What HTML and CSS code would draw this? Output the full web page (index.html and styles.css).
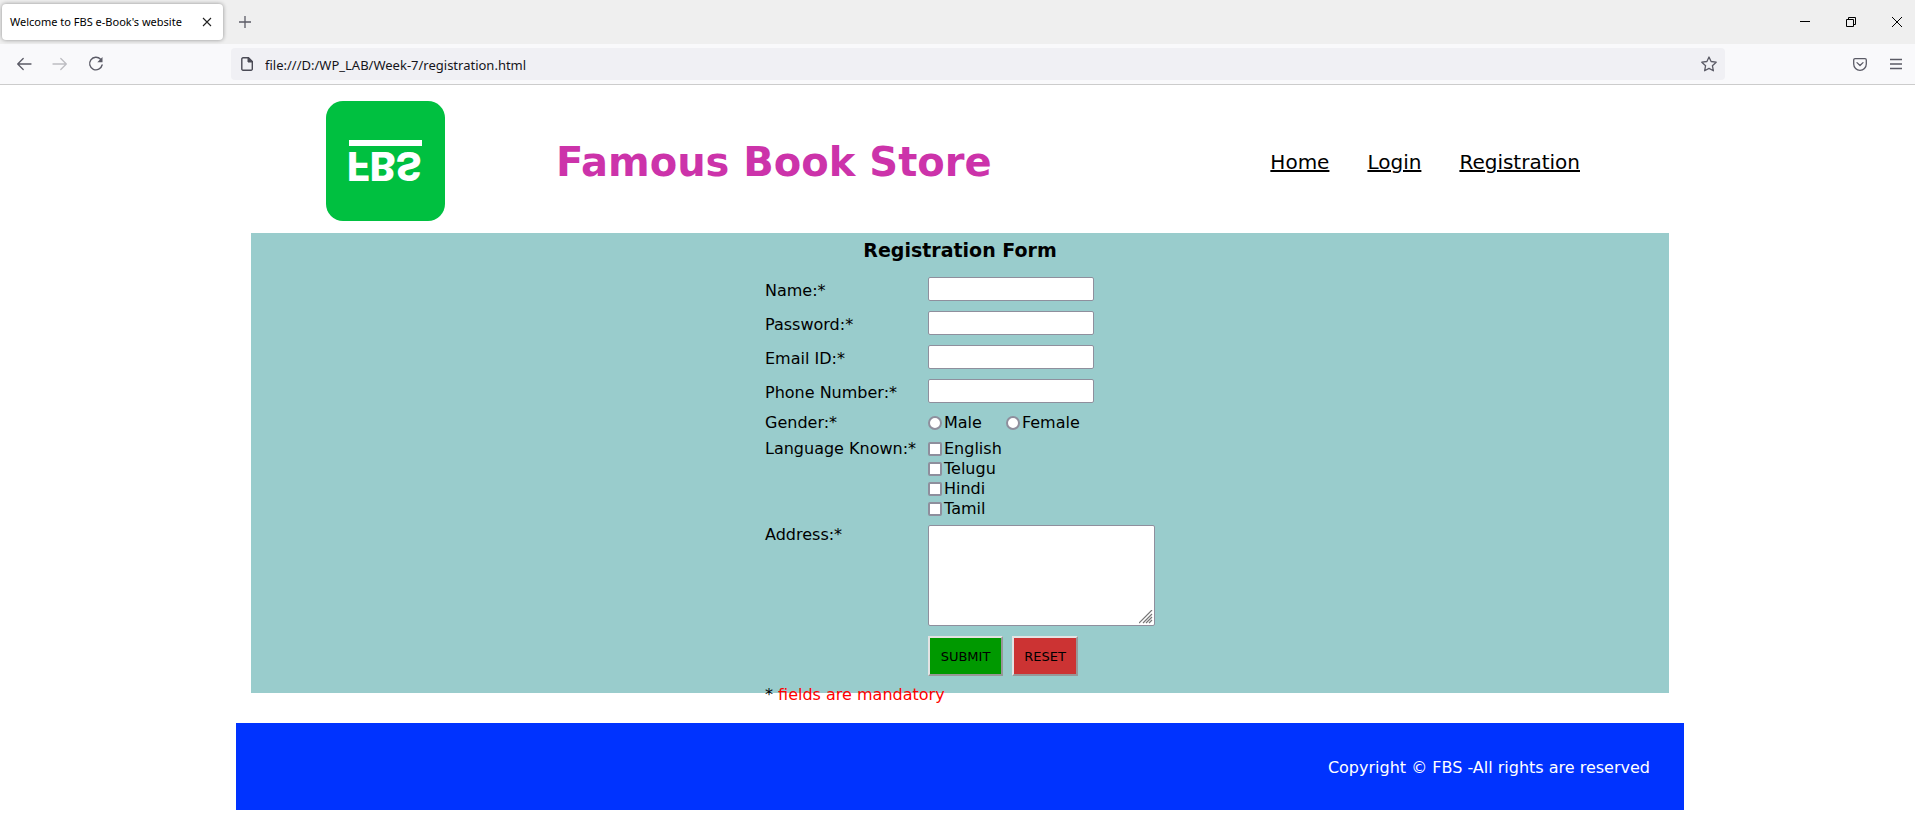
FILE: index.html
```html
<!DOCTYPE html>
<html lang="en">
<head>
<meta charset="utf-8">
<title>Welcome to FBS e-Book's website</title>
<link rel="stylesheet" href="styles.css">
</head>
<body>
<div class="browser">
  <div class="tabbar">
    <div class="tab">
      <span class="tab-title">Welcome to FBS e-Book's website</span>
      <button class="icon-button tab-close" type="button" aria-label="Close tab">
        <svg width="10" height="10" viewBox="0 0 10 10"><path d="M1 1l8 8M9 1l-8 8" stroke="#222" stroke-width="1.1" fill="none"/></svg>
      </button>
    </div>
    <button class="icon-button new-tab" type="button" aria-label="New tab">
      <svg width="12" height="12" viewBox="0 0 12 12"><path d="M6 0v12M0 6h12" stroke="#5b5b66" stroke-width="1.3" fill="none"/></svg>
    </button>
    <div class="window-controls">
      <button class="icon-button" type="button" aria-label="Minimize"><svg width="10" height="10" viewBox="0 0 10 10"><path d="M0 4.500h10" stroke="#000" fill="none"/></svg></button>
      <button class="icon-button" type="button" aria-label="Restore"><svg width="10" height="10" viewBox="0 0 10 10"><path d="M.5 2.500h7v7h-7zM2.500 2.500v-2h7v7h-2" stroke="#000" fill="none"/></svg></button>
      <button class="icon-button" type="button" aria-label="Close window"><svg width="10" height="10" viewBox="0 0 10 10"><path d="M0 0l10 10M10 0L0 10" stroke="#000" fill="none"/></svg></button>
    </div>
  </div>
  <div class="toolbar">
    <div class="history">
      <button class="icon-button" type="button" aria-label="Back"><svg width="16" height="16" viewBox="0 0 16 16"><path d="M15 8H1.800M7.200 2.500L1.700 8l5.500 5.500" stroke="#5b5b66" stroke-width="1.300" fill="none" stroke-linecap="round" stroke-linejoin="round"/></svg></button>
      <button class="icon-button" type="button" aria-label="Forward"><svg width="16" height="16" viewBox="0 0 16 16"><path d="M1 8h13.200M8.800 2.500L14.300 8l-5.500 5.500" stroke="#bdbdc2" stroke-width="1.300" fill="none" stroke-linecap="round" stroke-linejoin="round"/></svg></button>
      <button class="icon-button" type="button" aria-label="Reload"><svg width="16" height="16" viewBox="0 0 16 16"><path d="M12.600 3.300A6.300 6.300 0 1 0 14.100 9" stroke="#5b5b66" stroke-width="1.400" fill="none" stroke-linecap="round"/><path d="M14.500 1v5.200H9.300z" fill="#5b5b66"/></svg></button>
    </div>
    <div class="address-bar">
      <svg width="12" height="14" viewBox="0 0 12 14"><path d="M2 .8h5.500l3.800 3.700V12a1.200 1.200 0 0 1-1.200 1.200H2A1.200 1.200 0 0 1 .8 12V2A1.200 1.200 0 0 1 2 .8z" fill="none" stroke="#4a4a55" stroke-width="1.400"/><path d="M7 1v4h4.200z" fill="#4a4a55" stroke="#4a4a55"/></svg>
      <input class="address" type="text" aria-label="Address" value="file:///D:/WP_LAB/Week-7/registration.html">
      <button class="icon-button" type="button" aria-label="Bookmark this page"><svg width="16" height="16" viewBox="0 0 16 16"><path d="M8 1l2.100 4.500 5.100.7-3.800 3.500 1 5.100L8 12.400l-4.400 2.400 1-5.100L.8 6.200l5.100-.7z" fill="none" stroke="#5b5b66" stroke-width="1.300" stroke-linejoin="round"/></svg></button>
    </div>
    <div class="tools">
      <button class="icon-button" type="button" aria-label="Save to Pocket"><svg width="14" height="13" viewBox="0 0 14 13"><path d="M2 .7h10A1.300 1.300 0 0 1 13.300 2v4A6.300 6.300 0 0 1 .7 6V2A1.300 1.300 0 0 1 2 .7z" fill="none" stroke="#5b5b66" stroke-width="1.300"/><path d="M4 4.600l3 2.900 3-2.900" fill="none" stroke="#5b5b66" stroke-width="1.300" stroke-linecap="round" stroke-linejoin="round"/></svg></button>
      <button class="icon-button" type="button" aria-label="Open menu"><svg width="12" height="12" viewBox="0 0 12 12"><path d="M0 1.500h12M0 6h12M0 10.500h12" stroke="#5b5b66" stroke-width="1.300" fill="none"/></svg></button>
    </div>
  </div>
</div>

<div class="page">
  <header class="header">
    <svg class="logo" width="119" height="120" viewBox="0 0 119 120" role="img" aria-label="FBS logo">
      <rect width="119" height="120" rx="17" fill="#00c040"/>
      <rect x="23" y="39" width="73" height="6" fill="#fff"/>
      <text class="logo-text" x="21" y="-51" transform="scale(1 -1)">FBS</text>
    </svg>
    <h1 class="title">Famous Book Store</h1>
    <nav class="nav">
      <a href="#home">Home</a>
      <a href="#login">Login</a>
      <a href="#registration">Registration</a>
    </nav>
  </header>

  <main class="main">
    <h2 class="form-title">Registration Form</h2>
    <form class="form">
      <label class="field-label" for="name">Name:*</label>
      <input class="field" id="name" type="text">
      <label class="field-label" for="password">Password:*</label>
      <input class="field" id="password" type="password">
      <label class="field-label" for="email">Email ID:*</label>
      <input class="field" id="email" type="text">
      <label class="field-label" for="phone">Phone Number:*</label>
      <input class="field" id="phone" type="text">

      <span id="gender-label">Gender:*</span>
      <div class="gender" role="radiogroup" aria-labelledby="gender-label">
        <label class="choice"><input class="radio" type="radio" name="gender">Male</label>
        <label class="choice"><input class="radio" type="radio" name="gender">Female</label>
      </div>

      <span id="language-label">Language Known:*</span>
      <div role="group" aria-labelledby="language-label">
        <label class="choice"><input class="checkbox" type="checkbox">English</label>
        <label class="choice"><input class="checkbox" type="checkbox">Telugu</label>
        <label class="choice"><input class="checkbox" type="checkbox">Hindi</label>
        <label class="choice"><input class="checkbox" type="checkbox">Tamil</label>
      </div>

      <label for="address">Address:*</label>
      <textarea class="textarea" id="address"></textarea>

      <div class="actions">
        <button class="button submit" type="submit">SUBMIT</button>
        <button class="button reset" type="reset">RESET</button>
      </div>
      <p class="note">* <span class="note-text">fields are mandatory</span></p>
    </form>
  </main>

  <footer class="footer">Copyright © FBS -All rights are reserved</footer>
</div>
</body>
</html>
```
FILE: styles.css
```css
* { box-sizing: border-box; }

body {
  margin: 0;
  background: #fff;
  color: #000;
  font: 16px/20px Verdana, "DejaVu Sans", sans-serif;
}

/* Browser frame */
.browser {
  font-family: "Segoe UI", "Noto Sans", sans-serif;
  border-bottom: 1px solid #ccc;
}

.icon-button {
  display: flex;
  padding: 0;
  border: 0;
  background: none;
}

.tabbar {
  display: flex;
  align-items: center;
  height: 44px;
  padding: 0 13px 0 2px;
  background: #efefef;
}

.tab {
  display: flex;
  align-items: center;
  justify-content: space-between;
  width: 221px;
  height: 36px;
  padding: 0 11px 0 8px;
  border-radius: 4px;
  background: #fff;
  box-shadow: 0 0 4px rgba(0, 0, 0, 0.4);
  font-size: 11px;
  white-space: nowrap;
}

.new-tab { margin-left: 16px; }

.window-controls {
  display: flex;
  gap: 36px;
  margin-left: auto;
}

.toolbar {
  display: flex;
  align-items: center;
  height: 40px;
  padding: 0 13px 0 16px;
  background: #f9f9fb;
}

.history {
  display: flex;
  gap: 20px;
  width: 215px;
}

.address-bar {
  display: flex;
  align-items: center;
  flex: 1;
  gap: 12px;
  height: 32px;
  padding: 0 8px 0 10px;
  border-radius: 4px;
  background: #f0f0f4;
}

.address {
  flex: 1;
  padding: 2px 0 0;
  border: 0;
  background: none;
  color: #15141a;
  font: 13px "Segoe UI", "Noto Sans", sans-serif;
}

.tools {
  display: flex;
  align-items: center;
  justify-content: flex-end;
  gap: 23px;
  width: 177px;
}

/* Page */
.page { margin: 0 231px 0 236px; }

.header {
  display: flex;
  align-items: center;
  padding: 16px 104px 12px 90px;
}

.logo-text {
  fill: #fff;
  font: 800 39px Inter, sans-serif;
}

.title {
  margin: 2px 0 0 111px;
  color: #cc33aa;
  font-size: 40px;
  line-height: 48px;
}

.nav {
  display: flex;
  gap: 38px;
  margin: 2px 0 0 auto;
  font-size: 20px;
  line-height: 24px;
}

.nav a { color: #000; }

.main {
  display: flow-root;
  margin: 0 15px;
  padding-top: 5px;
  background: #99cccc;
}

.form-title {
  margin: 0 0 15px;
  font-size: 19px;
  line-height: 24px;
  text-align: center;
}

.form {
  display: grid;
  grid-template-columns: 163px 227px;
  row-gap: 6px;
  justify-content: center;
  align-items: start;
  margin-bottom: -12px;
}

.field-label { padding-top: 4px; }

.field,
.textarea {
  margin: 0;
  border: 1px solid #8f8f9d;
  border-radius: 2px;
  background: #fff;
}

.field {
  width: 166px;
  height: 24px;
  margin-bottom: 4px;
}

.gender {
  display: flex;
  gap: 24px;
}

.choice {
  display: flex;
  align-items: center;
  gap: 2px;
}

.radio,
.checkbox {
  appearance: none;
  width: 14px;
  height: 14px;
  margin: 0;
  border: 2px solid #8f8f9d;
  border-radius: 2px;
  background: #fff;
}

.radio { border-radius: 50%; }

.textarea {
  width: 100%;
  height: 101px;
}

.textarea::-webkit-resizer {
  background: url("data:image/svg+xml,%3Csvg xmlns='http://www.w3.org/2000/svg' width='15' height='15'%3E%3Cpath d='M0 13L13 0M4 13L13 4M7 13l6-6M10 13l3-3' stroke='%23777' stroke-width='1.2'/%3E%3C/svg%3E") no-repeat;
}

.actions {
  display: flex;
  grid-column: 2;
  gap: 9px;
  margin-top: 4px;
}

.button {
  height: 40px;
  padding: 0 10px;
  border: 2px solid;
  border-color: #e3e3e3 #979797 #979797 #e3e3e3;
  color: #000;
  font: 13px Verdana, "DejaVu Sans", sans-serif;
}

.submit {
  min-width: 75px;
  background: #009900;
}

.reset {
  min-width: 66px;
  background: #cc3333;
}

.note {
  grid-column: 1 / -1;
  margin: 3px 0 0;
}

.note-text { color: #f00; }

.footer {
  margin-top: 30px;
  padding: 35px 34px 32px;
  background: #0033ff;
  color: #fff;
  text-align: right;
}
```
